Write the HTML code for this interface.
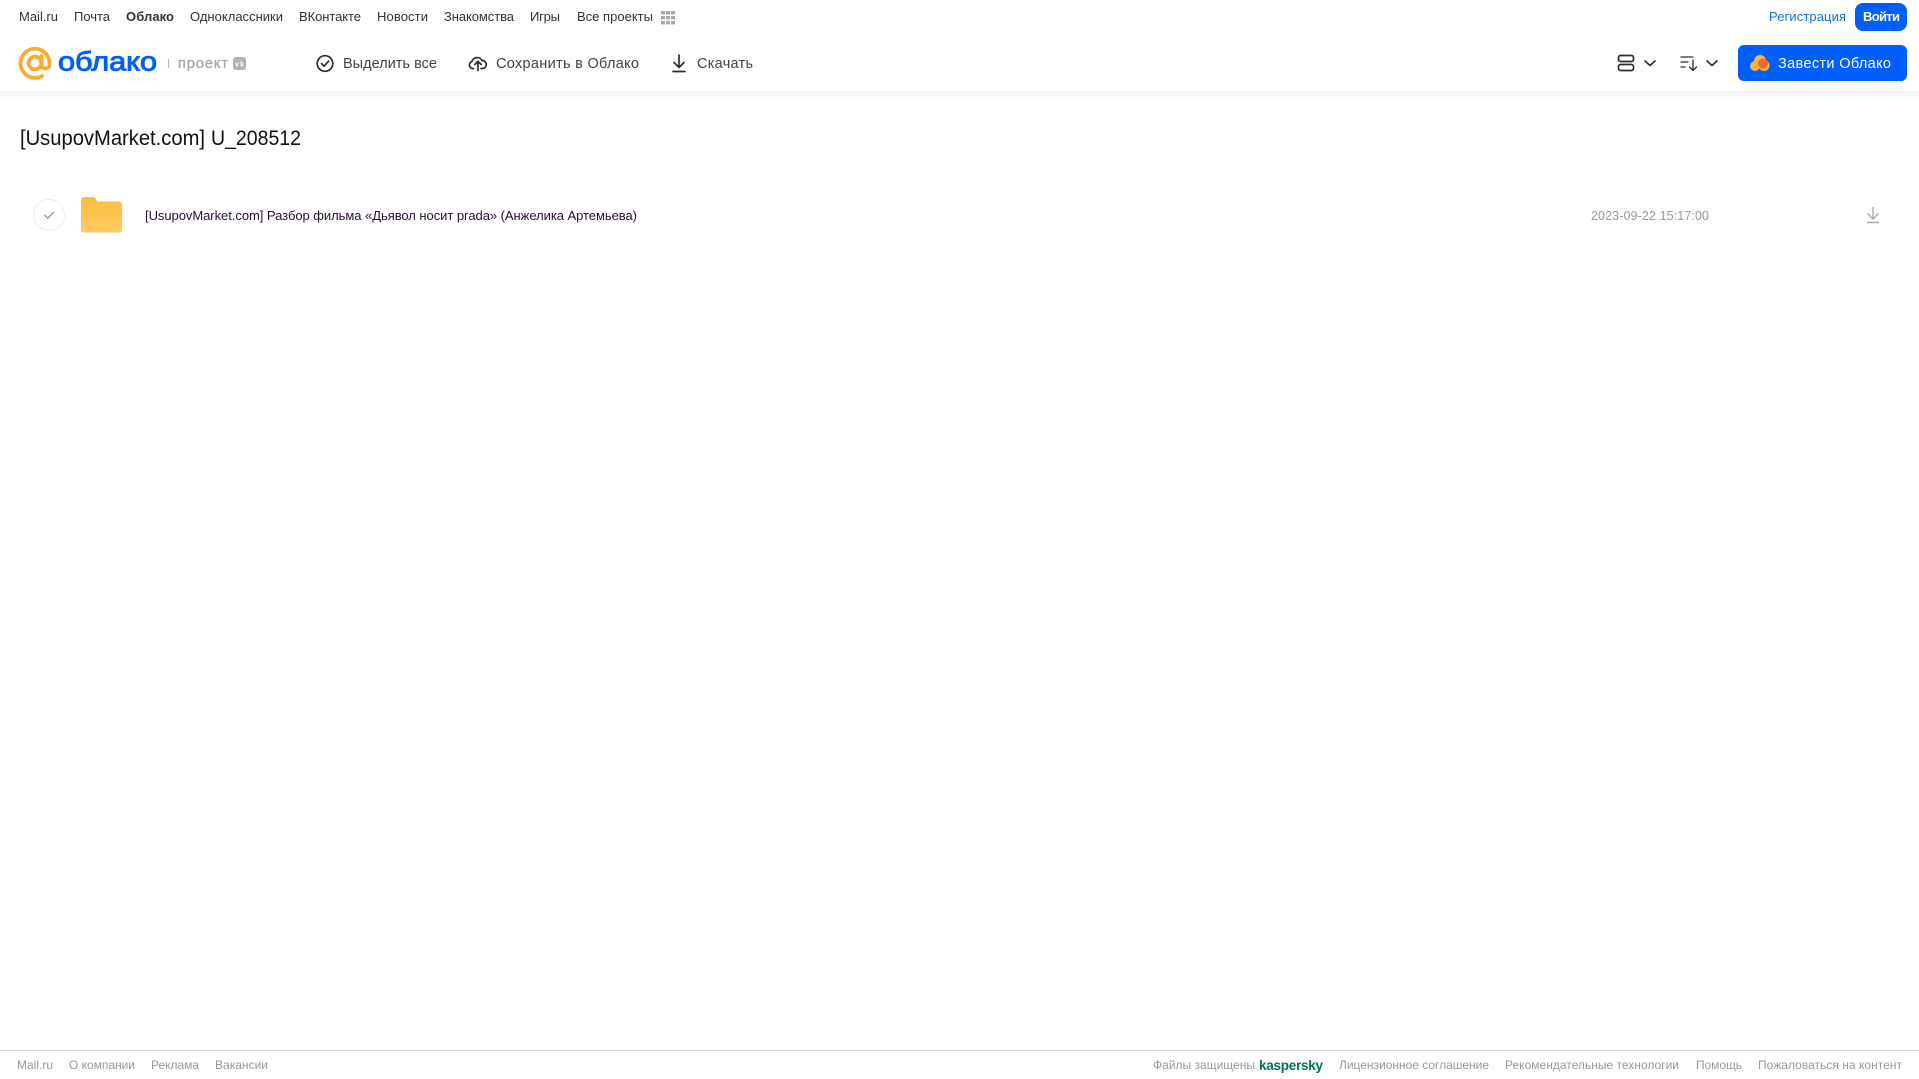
<!DOCTYPE html>
<html lang="ru"><head><meta charset="utf-8"><title>Облако</title>
<style>
html,body{margin:0;padding:0;background:#fff;width:1919px;height:1079px;overflow:hidden}
svg{display:block}
text{font-family:"Liberation Sans",sans-serif;white-space:pre}
.n{font-size:13px;fill:#333}
.t{font-size:14.5px;fill:#444}
.f{font-size:12px;fill:#999}
</style></head><body>
<svg width="1919" height="1079" viewBox="0 0 1919 1079" xmlns="http://www.w3.org/2000/svg">
<defs><linearGradient id="s" x1="0" y1="0" x2="0" y2="1"><stop offset="0" stop-color="#f4f4f4"/><stop offset="1" stop-color="#fff"/></linearGradient>
<linearGradient id="fd" x1="0" y1="0" x2="0" y2="1"><stop offset="0" stop-color="#ffbb40"/><stop offset="1" stop-color="#ffca63"/></linearGradient></defs>
<rect x="0" y="91" width="1919" height="10" fill="url(#s)"/>

<text class="n" x="19" y="21" textLength="39">Mail.ru</text>
<text class="n" x="74" y="21" textLength="36">Почта</text>
<text class="n" x="126" y="21" textLength="48" font-weight="700">Облако</text>
<text class="n" x="190" y="21" textLength="93">Одноклассники</text>
<text class="n" x="299" y="21" textLength="62">ВКонтакте</text>
<text class="n" x="377" y="21" textLength="51">Новости</text>
<text class="n" x="444" y="21" textLength="70">Знакомства</text>
<text class="n" x="530" y="21" textLength="30">Игры</text>
<text class="n" x="577" y="21" textLength="76">Все проекты</text>
<g fill="#a8a8a8"><rect x="661" y="11" width="4" height="3.400"/><rect x="666" y="11" width="4" height="3.400"/><rect x="671" y="11" width="4" height="3.400"/><rect x="661" y="16" width="4" height="3.400"/><rect x="666" y="16" width="4" height="3.400"/><rect x="671" y="16" width="4" height="3.400"/><rect x="661" y="21" width="4" height="3.400"/><rect x="666" y="21" width="4" height="3.400"/><rect x="671" y="21" width="4" height="3.400"/></g>

<text x="1769" y="21" font-size="13" fill="#1a6fe0" textLength="77">Регистрация</text>
<rect x="1855" y="3" width="52" height="28" rx="8" fill="#005ff9"/>
<text x="1863" y="21" font-size="13" font-weight="700" fill="#fff" textLength="37">Войти</text>

<!-- logo -->
<g fill="none" stroke="#ffa930" stroke-width="3.800" stroke-linecap="round">
<path d="M42 76A14.500 14.500 0 1 1 49.500 63v1.500a4 4 0 0 1-8 0V56"/>
<circle cx="35" cy="63" r="6.400"/>
</g>
<text x="58" y="70.500" font-size="27" fill="#005ff9" stroke="#005ff9" stroke-width=".9" textLength="99" lengthAdjust="spacingAndGlyphs">облако</text>
<rect x="168" y="59" width="1" height="9" fill="#b5b5b5"/>
<text x="178" y="68" font-size="14.500" fill="#a8a8a8" stroke="#a8a8a8" stroke-width=".35" textLength="50">проект</text>
<rect x="233" y="57" width="13" height="13" rx="3" fill="#b3b3b3"/>
<text x="235" y="66.500" font-size="7" font-weight="700" fill="#fff" textLength="9">vk</text>

<!-- toolbar -->
<g fill="none" stroke="#2c2d2e" stroke-width="1.700" stroke-linecap="round" stroke-linejoin="round">
<circle cx="325" cy="63.500" r="7.800"/><path d="M321.500 63.500l2.600 2.600 4.600-5"/>
<path d="M473.500 68.500h-1a3.500 3.500 0 0 1-.7-6.800a5.500 5.500 0 0 1 10.200-1.200a4 4 0 0 1 .5 8h-1.500M478 70.500V61.500M474.800 64.500l3.200-3.200 3.200 3.200"/>
<path d="M679 55v12M674 62.500l5 5 5-5M673 71.500h12"/>
</g>
<text class="t" x="343" y="68" textLength="94">Выделить все</text>
<text class="t" x="496" y="68" textLength="143">Сохранить в Облако</text>
<text class="t" x="697" y="68" textLength="56">Скачать</text>

<g fill="none" stroke="#2c2d2e" stroke-width="1.700" stroke-linecap="round" stroke-linejoin="round">
<rect x="1618.500" y="55.500" width="15" height="6" rx="2"/><rect x="1618.500" y="64.500" width="15" height="6" rx="2"/>
<path d="M1645 61l5 4.500 5-4.500M1707 61l5 4.500 5-4.500"/>
<path d="M1681 57h12M1681 62h7M1681 67h4M1693 60v10M1689.500 67l3.500 3.500 3.500-3.500" stroke-width="1.300"/>
</g>
<rect x="1738" y="45" width="169" height="36" rx="6" fill="#005ff9"/>
<g fill="#ffb23e"><circle cx="1755" cy="66" r="5"/><circle cx="1760" cy="61" r="6"/><circle cx="1764" cy="65.500" r="5.500"/></g>
<circle cx="1763" cy="63.500" r="5" fill="#f0682a"/>
<text x="1778" y="68" font-size="14.500" fill="#fff" textLength="113">Завести Облако</text>

<!-- title -->
<text x="20" y="145" font-size="21.500" fill="#111" textLength="185" lengthAdjust="spacingAndGlyphs">[UsupovMarket.com]</text>
<text x="211" y="145" font-size="21.500" fill="#111" textLength="90" lengthAdjust="spacingAndGlyphs">U_208512</text>

<!-- row -->
<circle cx="49" cy="215" r="15.500" fill="#fff" stroke="#eeeeee"/>
<path d="M44.800 215.300l3 3 5.600-5.800" fill="none" stroke="#999" stroke-width="1.400" stroke-linecap="round" stroke-linejoin="round"/>
<path d="M81 199.500a2.500 2.500 0 0 1 2.500-2.500h8.500c2 0 3 .8 4 2l1.500 2.500h21.500a3 3 0 0 1 3 3v25.500a2.500 2.500 0 0 1-2.500 2.500h-36a2.500 2.500 0 0 1-2.500-2.500z" fill="url(#fd)"/>
<text x="145" y="220" font-size="13" fill="#2a1030" textLength="492">[UsupovMarket.com] Разбор фильма «Дьявол носит prada» (Анжелика Артемьева)</text>
<text x="1591" y="220" font-size="12.500" fill="#999" textLength="118">2023-09-22 15:17:00</text>
<path d="M1873 207v12M1867.500 213.500l5.500 5.500 5.500-5.500M1867 222.500h12" fill="none" stroke="#aaa" stroke-width="1.400"/>

<!-- footer -->
<rect x="0" y="1050" width="1919" height="1" fill="#d9d9d9"/>
<text class="f" x="17" y="1069" textLength="36">Mail.ru</text>
<text class="f" x="69" y="1069" textLength="66">О компании</text>
<text class="f" x="151" y="1069" textLength="48">Реклама</text>
<text class="f" x="215" y="1069" textLength="53">Вакансии</text>
<text class="f" x="1153" y="1069" textLength="102">Файлы защищены</text>
<text x="1259" y="1070" font-size="13.500" font-weight="700" fill="#00735e" textLength="64">kaspersky</text>
<text class="f" x="1339" y="1069" textLength="150">Лицензионное соглашение</text>
<text class="f" x="1505" y="1069" textLength="174">Рекомендательные технологии</text>
<text class="f" x="1696" y="1069" textLength="46">Помощь</text>
<text class="f" x="1758" y="1069" textLength="144">Пожаловаться на контент</text>
</svg>
</body></html>
